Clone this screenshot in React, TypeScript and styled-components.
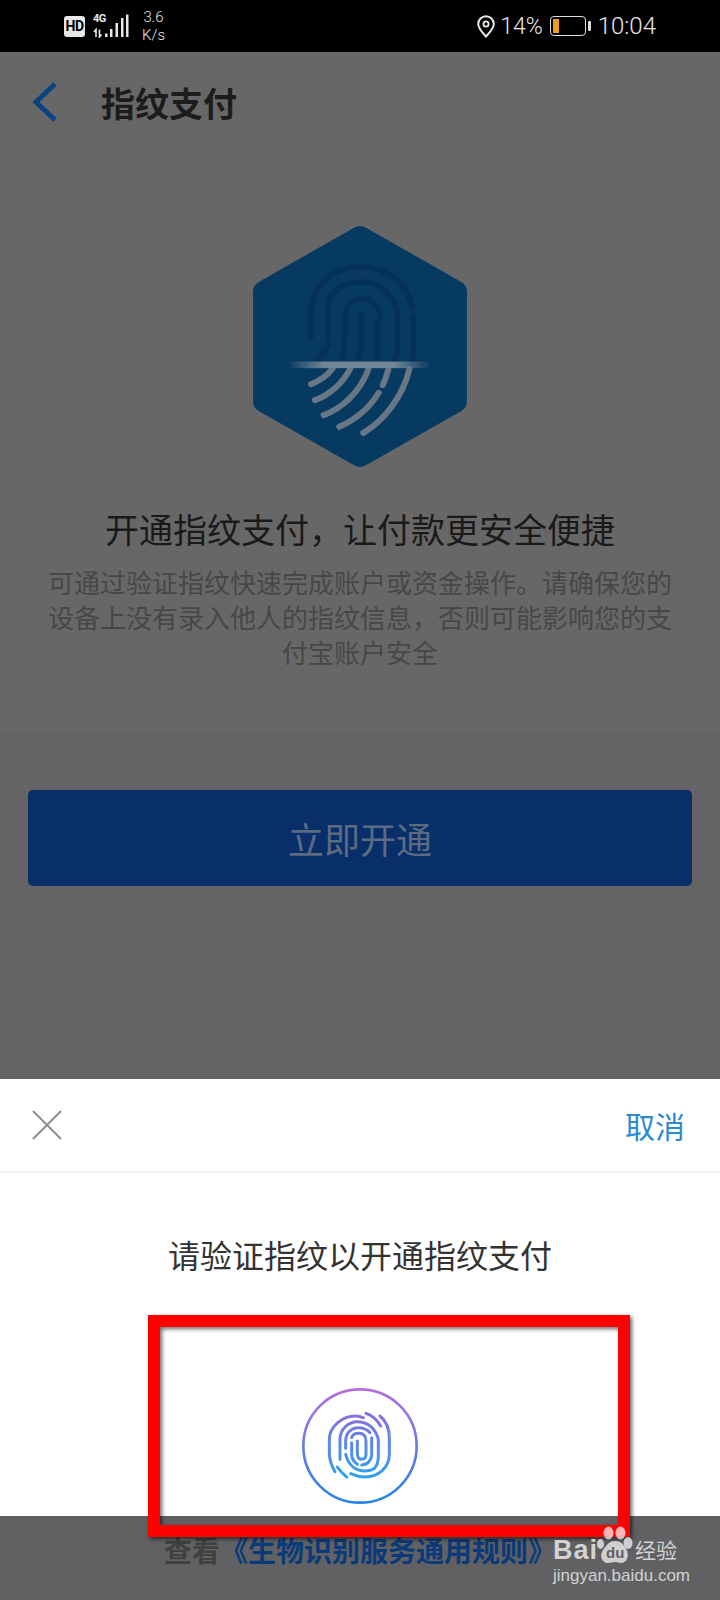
import React from 'react'
import styled, { createGlobalStyle } from 'styled-components'

const CJK = `"Noto Sans CJK SC", "Noto Sans", sans-serif`

const GlobalStyle = createGlobalStyle`
  html, body {
    margin: 0;
    padding: 0;
    background: #666;
  }
  * {
    box-sizing: border-box;
  }
`

const topLines = [
  'M240 380 V310 C240 220 310 170 392 170 C470 170 530 220 545 295',
  'M290 375 V300 C290 245 335 215 392 215 C450 215 495 260 500 320 V400 C500 420 495 440 488 458',
  'M292 398 C285 420 270 440 255 455',
  'M335 452 C340 410 342 380 342 320 C342 290 360 265 392 265 C425 265 445 290 447 320',
  'M392 315 V390 C392 415 385 440 378 455',
  'M440 340 V400 C440 420 438 440 435 455',
  'M547 320 V400 C547 425 545 445 541 462',
]

const bottomLines = [
  'M240 522 C265 512 290 495 305 475',
  'M252 570 C295 555 335 520 358 475',
  'M278 615 C330 595 385 550 412 478',
  'M325 650 C370 630 415 595 443 548',
  'M455 525 C462 510 468 495 472 478',
  'M397 668 C460 630 515 560 535 478',
]

const HexBadge = () => (
  <HexSvg viewBox="66 48 642 722">
    <defs>
      <linearGradient id="scan" x1="0" x2="1" y1="0" y2="0">
        <stop offset="0" stopColor="#6f8598" stopOpacity="0" />
        <stop offset="0.25" stopColor="#6f8598" />
        <stop offset="0.75" stopColor="#6f8598" />
        <stop offset="1" stopColor="#6f8598" stopOpacity="0" />
      </linearGradient>
    </defs>
    <polygon
      points="387,84 672,246 672,572 387,734 102,572 102,246"
      fill="#073a61"
      stroke="#073a61"
      strokeWidth="72"
      strokeLinejoin="round"
    />
    <g fill="none" strokeLinecap="round">
      {topLines.map(d => <path key={d} d={d} stroke="#04305a" strokeWidth="17" />)}
      {bottomLines.map(d => <path key={d} d={d} stroke="#687785" strokeWidth="18" />)}
    </g>
    <rect x="170" y="454" width="430" height="20" fill="url(#scan)" />
  </HexSvg>
)

const touchLines = [
  'M258 127 C275 132 290 145 302 165',
  'M300 135 C318 150 328 175 328 200 V250 C328 290 295 318 255 318 C240 318 225 314 212 308',
  'M200 318 C190 310 180 300 172 288',
  'M165 302 C155 285 148 265 148 245 V205 C148 165 190 135 225 135 C235 135 243 137 250 140',
  'M180 265 V205 C180 175 205 152 232 152 C255 152 285 165 295 205 V255 C295 270 290 285 283 292',
  'M197 232 V210 C197 185 215 170 235 170 C250 170 262 176 270 185',
  'M275 200 V250 C275 270 260 282 245 282',
  'M197 250 C205 280 225 300 255 300 C265 300 275 297 280 294',
  'M215 200 C217 193 225 187 237 187 C250 187 258 195 258 212 V250 C258 262 252 265 245 265 C235 265 232 255 232 245 V210',
  'M215 215 V250 C215 262 220 272 232 280',
]

const TouchIcon = () => (
  <TouchSvg viewBox="0 0 450 420">
    <defs>
      <linearGradient id="touch" gradientUnits="userSpaceOnUse" x1="0" x2="0" y1="55" y2="395">
        <stop offset="0" stopColor="#b56fdf" />
        <stop offset="1" stopColor="#2386e6" />
      </linearGradient>
      <linearGradient id="print" gradientUnits="userSpaceOnUse" x1="0" x2="0" y1="125" y2="320">
        <stop offset="0" stopColor="#8d6ee0" />
        <stop offset="1" stopColor="#2fa3ee" />
      </linearGradient>
    </defs>
    <circle cx="240" cy="225" r="170" fill="none" stroke="url(#touch)" strokeWidth="8" />
    <g fill="none" stroke="url(#print)" strokeWidth="9" strokeLinecap="round">
      {touchLines.map(d => <path key={d} d={d} />)}
    </g>
  </TouchSvg>
)

const Signal = () => (
  <svg width="36" height="24" viewBox="0 0 36 24">
    <g fill="#e8e8e8">
      <rect x="12" y="19.5" width="2.5" height="3.5" />
      <rect x="17" y="15" width="2.5" height="8" />
      <rect x="22.5" y="9" width="2.5" height="14" />
      <rect x="28" y="4" width="2.5" height="19" />
      <rect x="33" y="0.5" width="2.5" height="22.5" />
    </g>
    <path d="M1 18 L3 15.5 V23 M6.5 15.5 V23 L8.5 20.5" stroke="#e8e8e8" strokeWidth="1.6" fill="none" />
  </svg>
)

const Pin = () => (
  <svg width="18" height="23" viewBox="0 0 18 23">
    <path
      d="M9 21.5 C5 17 1.2 13.5 1.2 9 A7.8 7.8 0 0 1 16.8 9 C16.8 13.5 13 17 9 21.5 Z"
      fill="none"
      stroke="#e8e8e8"
      strokeWidth="2"
    />
    <circle cx="9" cy="9" r="2.6" fill="none" stroke="#e8e8e8" strokeWidth="1.8" />
  </svg>
)

const Paw = () => (
  <PawSvg viewBox="0 0 36 38">
    <g fill="rgba(255, 255, 255, 0.7)">
      <ellipse cx="11.5" cy="7" rx="5" ry="6.5" />
      <ellipse cx="23.5" cy="7" rx="5" ry="6.5" />
      <ellipse cx="3.5" cy="18" rx="3.5" ry="5" />
      <ellipse cx="31" cy="17" rx="4.5" ry="6" />
      <path d="M18 15 C24 15 26 18 29 23 C33 29 30 37 24 37 C22 37 20 36 18 36 C16 36 14 37 11 37 C5 37 2 30 6 24 C10 19 12 15 18 15 Z" />
    </g>
  </PawSvg>
)

export default function App() {
  return (
    <>
      <GlobalStyle />
      <Screen>
        <StatusBar>
          <StatusGroup>
            <HdBadge>HD</HdBadge>
            <NetWrap>
              <NetLabel>4G</NetLabel>
              <Signal />
            </NetWrap>
            <Speed>3.6<br />K/s</Speed>
          </StatusGroup>
          <StatusGroup>
            <Pin />
            <Percent>14%</Percent>
            <Battery><BatteryFill /></Battery>
            <BatteryCap />
            <Clock>10:04</Clock>
          </StatusGroup>
        </StatusBar>

        <Intro>
          <Header>
            <svg width="26" height="40" viewBox="0 0 26 40">
              <path d="M23 2 L4 20 L23 38" fill="none" stroke="#0a4380" strokeWidth="5" />
            </svg>
            <Title>指纹支付</Title>
          </Header>
          <HexBadge />
          <Heading>开通指纹支付，让付款更安全便捷</Heading>
          <Description>
            可通过验证指纹快速完成账户或资金操作。请确保您的设备上没有录入他人的指纹信息，否则可能影响您的支付宝账户安全
          </Description>
        </Intro>

        <Actions>
          <OpenButton>立即开通</OpenButton>
        </Actions>

        <Sheet>
          <SheetHeader>
            <svg width="30" height="30" viewBox="0 0 30 30">
              <path d="M1 1 L29 29 M29 1 L1 29" stroke="#8e8e8e" strokeWidth="2" />
            </svg>
            <Cancel>取消</Cancel>
          </SheetHeader>
          <SheetBody>
            <Prompt>请验证指纹以开通指纹支付</Prompt>
            <TouchIcon />
          </SheetBody>
        </Sheet>

        <Footer>
          查看<FooterLink>《生物识别服务通用规则》</FooterLink>
        </Footer>

        <RedFrame />

        <Watermark>
          <LogoRow>
            <LogoBai>Bai</LogoBai>
            <PawWrap>
              <Paw />
              <PawText>du</PawText>
            </PawWrap>
            <LogoCn>经验</LogoCn>
          </LogoRow>
          <LogoUrl>jingyan.baidu.com</LogoUrl>
        </Watermark>
      </Screen>
    </>
  )
}

const Screen = styled.div`
  position: relative;
  width: 720px;
  height: 1600px;
  display: flex;
  flex-direction: column;
  overflow: hidden;
  font-family: ${CJK};
  background: #666;
`

const StatusBar = styled.div`
  height: 52px;
  flex-shrink: 0;
  background: #000;
  color: #e8e8e8;
  display: flex;
  align-items: center;
  justify-content: space-between;
  padding: 0 64px;
  font-family: Roboto, sans-serif;
`

const StatusGroup = styled.div`
  display: flex;
  align-items: center;
`

const HdBadge = styled.div`
  width: 21px;
  height: 21px;
  background: #e8e8e8;
  color: #000;
  border-radius: 3px;
  font-size: 14px;
  font-weight: 700;
  line-height: 21px;
  text-align: center;
  letter-spacing: -0.5px;
`

const NetWrap = styled.div`
  position: relative;
  width: 36px;
  height: 24px;
  margin-left: 8px;
`

const NetLabel = styled.span`
  position: absolute;
  left: 0;
  top: -1px;
  font-size: 11px;
  line-height: 12px;
  font-weight: 700;
  letter-spacing: -0.5px;
`

const Speed = styled.div`
  margin-left: 13px;
  font-size: 15px;
  line-height: 18px;
  text-align: center;
  font-weight: 300;
`

const Percent = styled.span`
  margin-left: 5px;
  font-size: 23px;
  font-weight: 300;
`

const Battery = styled.div`
  width: 36px;
  height: 20px;
  margin-left: 7px;
  border: 1.5px solid #ddd;
  border-radius: 4px;
  padding: 2px;
`

const BatteryFill = styled.div`
  width: 6px;
  height: 100%;
  background: #f29a1f;
`

const BatteryCap = styled.div`
  width: 3px;
  height: 10px;
  margin-left: 2px;
  background: #ddd;
  border-radius: 1px;
`

const Clock = styled.span`
  margin-left: 7px;
  font-size: 24px;
  font-weight: 300;
`

const Intro = styled.div`
  height: 678px;
  flex-shrink: 0;
  background: #676767;
  display: flex;
  flex-direction: column;
  align-items: center;
`

const Header = styled.div`
  align-self: stretch;
  height: 100px;
  display: flex;
  align-items: center;
  padding-left: 32px;
`

const Title = styled.h1`
  margin: 0 0 0 43px;
  font-size: 34px;
  font-weight: 700;
  color: #1c1c1c;
`

const HexSvg = styled.svg`
  width: 214px;
  height: 241px;
  margin-top: 74px;
  flex-shrink: 0;
`

const Heading = styled.h2`
  margin: 42px 0 0;
  font-size: 34px;
  line-height: 40px;
  font-weight: 400;
  color: #1a1a1a;
`

const Description = styled.p`
  margin: 15px 0 0;
  width: 624px;
  font-size: 26px;
  line-height: 35px;
  text-align: center;
  color: #474747;
`

const Actions = styled.div`
  flex: 1;
  background: #646465;
  padding: 60px 28px 0;
`

const OpenButton = styled.div`
  height: 96px;
  border-radius: 5px;
  background: #082f6a;
  color: #5d6b82;
  font-size: 36px;
  display: flex;
  align-items: center;
  justify-content: center;
`

const Sheet = styled.div`
  height: 437px;
  flex-shrink: 0;
  background: #fff;
  display: flex;
  flex-direction: column;
`

const SheetHeader = styled.div`
  height: 94px;
  display: flex;
  align-items: center;
  justify-content: space-between;
  padding: 0 35px 0 32px;
  border-bottom: 2px solid #f2f2f2;
`

const Cancel = styled.span`
  font-size: 30px;
  color: #2a8ad2;
`

const SheetBody = styled.div`
  flex: 1;
  display: flex;
  flex-direction: column;
  align-items: center;
`

const Prompt = styled.div`
  margin-top: 58px;
  font-size: 32px;
  line-height: 46px;
  color: #333;
`

const TouchSvg = styled.svg`
  width: 150px;
  height: 140px;
  margin-top: 94px;
  margin-left: -11px;
`

const Footer = styled.div`
  height: 84px;
  flex-shrink: 0;
  background: #616163;
  padding-top: 12px;
  text-align: center;
  font-size: 28px;
  line-height: 44px;
  font-weight: 700;
  color: #404040;
`

const FooterLink = styled.span`
  color: #0b3a78;
`

const RedFrame = styled.div`
  position: absolute;
  left: 148px;
  top: 1315px;
  width: 482px;
  height: 222px;
  border: 12px solid #f00;
  box-shadow: 2px 2px 4px rgba(0, 0, 0, 0.6), inset 2px 2px 4px rgba(0, 0, 0, 0.6);
`

const Watermark = styled.div`
  position: absolute;
  left: 553px;
  top: 1523px;
  width: 130px;
  color: #d2d2d2;
  font-family: "Liberation Sans", sans-serif;
`

const LogoRow = styled.div`
  display: flex;
  align-items: flex-end;
  height: 41px;
`

const LogoBai = styled.span`
  font-size: 27px;
  line-height: 28px;
  font-weight: 700;
  letter-spacing: 1px;
`

const PawWrap = styled.div`
  position: relative;
  width: 36px;
  height: 38px;
  margin-left: -1px;
`

const PawSvg = styled.svg`
  display: block;
  width: 36px;
  height: 38px;
`

const PawText = styled.span`
  position: absolute;
  left: 9px;
  top: 19px;
  font-size: 15px;
  line-height: 15px;
  font-weight: 700;
  color: #616163;
`

const LogoCn = styled.span`
  margin-left: 2px;
  font-family: ${CJK};
  font-size: 21px;
  line-height: 30px;
`

const LogoUrl = styled.div`
  margin-top: 2px;
  font-size: 17px;
  line-height: 20px;
  white-space: nowrap;
`
